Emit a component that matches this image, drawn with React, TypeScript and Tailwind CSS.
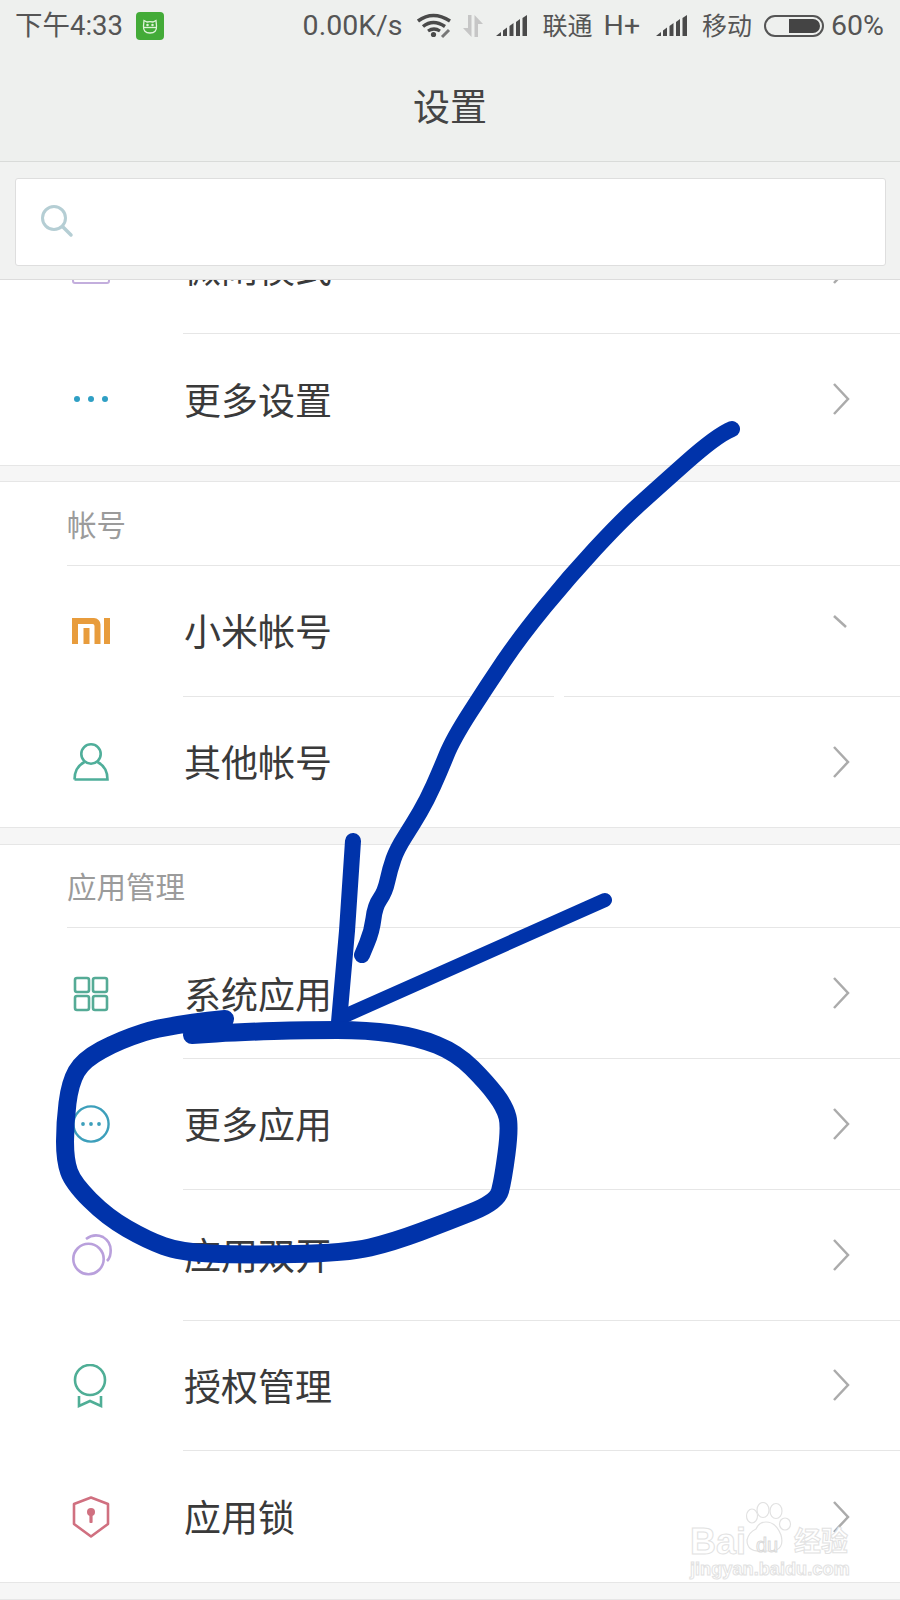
import type { ReactNode } from "react";

const FONT = "font-['Roboto','Noto_Sans_CJK_SC',sans-serif]";

// turns the sampled pen points into one smooth stroke
const smooth = (pts: number[][]) => {
  let d = `M${pts[0][0]} ${pts[0][1]}`;
  for (let i = 1; i < pts.length - 1; i++) {
    const mx = (pts[i][0] + pts[i + 1][0]) / 2;
    const my = (pts[i][1] + pts[i + 1][1]) / 2;
    d += ` Q${pts[i][0]} ${pts[i][1]} ${mx} ${my}`;
  }
  const last = pts[pts.length - 1];
  return d + ` L${last[0]} ${last[1]}`;
};

const longArrow = [
  [732, 429], [717, 435], [653, 492], [620, 522], [570, 576], [520, 637], [487, 686], [453, 739],
  [440, 771], [427, 800], [413, 824], [397, 849], [390, 869], [385, 892], [375, 906], [372, 931], [362, 955],
];

const loop = [
  [225, 1019], [167, 1025], [120, 1040], [83, 1060], [70, 1083], [65, 1123], [65, 1160], [73, 1183],
  [107, 1217], [147, 1240], [180, 1252], [240, 1255], [347, 1253], [393, 1242], [447, 1222], [497, 1202],
  [503, 1180], [510, 1127], [505, 1107], [487, 1083], [457, 1053], [417, 1037], [367, 1030], [307, 1030],
  [240, 1032], [192, 1035],
];

const Chevron = ({ cut = false }: { cut?: boolean }) => (
  <svg width="18" height="32" viewBox="0 0 18 32" fill="none" stroke="#ababab" strokeWidth="2.5" className="mr-[50px] shrink-0">
    {cut ? <path d="M2 1L14 12" /> : <path d="M2 1L16 16L2 31" />}
  </svg>
);

const Row = ({ icon, label, last = false, cut = false }: { icon: ReactNode; label: string; last?: boolean; cut?: boolean }) => (
  <div className="flex h-[130.75px] bg-white">
    <div className="flex w-[183px] shrink-0 items-center pl-[72px]">{icon}</div>
    <div className={`flex flex-1 items-center justify-between ${last ? "" : "border-b border-[#e6e6e6]"}`}>
      <span className="pl-[1px] pt-[6px] text-[37px] leading-none text-[#3a3a3a]">{label}</span>
      <Chevron cut={cut} />
    </div>
  </div>
);

const SectionHead = ({ title }: { title: string }) => (
  <div className="h-[83.5px] bg-white pl-[67px]">
    <div className="flex h-full items-center border-b border-[#e6e6e6] pt-[6px] text-[29.5px] leading-none text-[#9b9b9b]">{title}</div>
  </div>
);

const Gap = () => <div className="h-[17.5px] border-y border-[#e6e6e6] bg-[#f6f6f6]" />;

const Signal = () => (
  <svg width="32" height="22" viewBox="0 0 32 22" fill="#4a4a4a">
    <path d="M0 21L5 17V21Z" />
    <path d="M7 15.5L11 12.5V21H7Z" />
    <path d="M13.5 11L17.5 8V21H13.5Z" />
    <path d="M20 7L24 4V21H20Z" />
    <path d="M26.5 3L31 0V21H26.5Z" />
  </svg>
);

export default function App() {
  return (
    <div className={`relative h-[1600px] w-[900px] overflow-hidden bg-white ${FONT}`}>
      {/* status bar */}
      <div className="flex h-[52px] items-center justify-between bg-[#eef0ee] pl-[15px] pr-[16px] text-[#555]">
        <div className="flex items-center">
          <span className="text-[27.5px] leading-none">下午4:33</span>
          <div className="ml-[13px] flex h-[28px] w-[28px] items-center justify-center rounded-[4px] bg-[#43ab38]">
            <svg width="18" height="18" viewBox="0 0 18 18" fill="none" stroke="#dff3da" strokeWidth="1.3">
              <path d="M3 3.5L6 5Q9 4.2 12 5L15 3.5L15.5 9Q16 16 9 16Q2 16 2.5 9Z" />
              <path d="M3 10.5H15" />
              <circle cx="6.5" cy="8" r=".6" />
              <circle cx="11.5" cy="8" r=".6" />
            </svg>
          </div>
        </div>
        <div className="flex items-center">
          <span className="text-[28.5px] leading-none">0.00K/s</span>
          <svg className="ml-[14px]" width="36" height="26" viewBox="0 0 36 26" fill="none" stroke="#4a4a4a">
            <path d="M1 8Q16 -3 33 8" strokeWidth="3.5" />
            <path d="M6 13.5Q16 5.5 28 13.5" strokeWidth="3.5" />
            <path d="M11 18Q17 14 23 18" strokeWidth="3.2" />
            <circle cx="16.5" cy="21.5" r="2.6" fill="#4a4a4a" stroke="none" />
            <path d="M25 24L32 17" stroke="#777" strokeWidth="3" />
          </svg>
          <svg className="ml-[9px]" width="22" height="22" viewBox="0 0 22 22" fill="#c6c6c6">
            <path d="M6 0H9.5V22L1 13H6Z" />
            <path d="M12.5 0L21 9H16V22H12.5Z" />
          </svg>
          <div className="ml-[12px]">
            <Signal />
          </div>
          <span className="ml-[15px] text-[25px] leading-none">联通</span>
          <span className="ml-[11px] text-[28.5px] leading-none">H+</span>
          <div className="ml-[16px]">
            <Signal />
          </div>
          <span className="ml-[14px] text-[25px] leading-none">移动</span>
          <div className="ml-[12px] flex h-[22px] w-[60px] justify-end rounded-full border-2 border-[#555] p-[2px]">
            <div className="h-full w-[31px] rounded-r-full bg-[#444]" />
          </div>
          <span className="ml-[7px] text-[28.5px] leading-none">60%</span>
        </div>
      </div>

      {/* title */}
      <div className="flex h-[110px] items-center justify-center border-b border-[#d9dbd9] bg-[#eef0ee] pt-[3px] text-[37px] leading-none text-[#444]">
        设置
      </div>

      {/* search */}
      <div className="h-[118px] border-b border-[#dcdcdc] bg-[#f1f2f1] pl-[15px] pr-[14px] pt-[16px]">
        <div className="flex h-[88px] items-center rounded-[3px] border border-[#dedede] bg-white pl-[24px]">
          <svg width="36" height="36" viewBox="0 0 36 36" fill="none" stroke="#b5ced4" strokeWidth="3">
            <circle cx="14" cy="14" r="11.5" />
            <path d="M22.5 22.5L31 31" strokeWidth="3.5" strokeLinecap="round" />
          </svg>
        </div>
      </div>

      {/* the list is scrolled, so the first row is cut by the search box */}
      <div className="h-[54px] overflow-hidden bg-white">
        <div className="-mt-[77px]">
          <Row
            label="微闹模式"
            icon={<div className="h-[32px] w-[38px] rounded-[3px] border-2 border-[#c3aedd]" />}
          />
        </div>
      </div>
      <Row
        label="更多设置"
        last
        icon={
          <svg width="38" height="8" viewBox="0 0 38 8" fill="#2f9fc4">
            <circle cx="5" cy="4" r="3" />
            <circle cx="19" cy="4" r="3" />
            <circle cx="33" cy="4" r="3" />
          </svg>
        }
      />
      <Gap />

      <SectionHead title="帐号" />
      <Row
        label="小米帐号"
        cut
        icon={
          <svg width="38" height="26" viewBox="0 0 38 26" fill="#e89c3c">
            <path d="M0 0H22A6.5 6.5 0 0 1 28.5 6.5V26H22.5V8A2 2 0 0 0 20.5 6H6V26H0Z" />
            <rect x="11.5" y="10" width="6" height="16" />
            <rect x="32" width="6" height="26" />
          </svg>
        }
      />
      <Row
        label="其他帐号"
        last
        icon={
          <svg width="38" height="38" viewBox="0 0 38 38" fill="none" stroke="#4fae9a" strokeWidth="2.6">
            <circle cx="19" cy="11" r="9.7" />
            <path d="M2.5 36.5Q2.5 24 12.5 19M25.5 19Q35.5 24 35.5 36.5H2.5" />
          </svg>
        }
      />
      <Gap />

      <SectionHead title="应用管理" />
      <Row
        label="系统应用"
        icon={
          <svg width="38" height="36" viewBox="0 0 38 36" fill="none" stroke="#55ab96" strokeWidth="2.6">
            <rect x="3" y="2" width="14" height="14" rx="2" />
            <rect x="21" y="2" width="14" height="14" rx="2" />
            <rect x="3" y="20" width="14" height="14" rx="2" />
            <rect x="21" y="20" width="14" height="14" rx="2" />
          </svg>
        }
      />
      <Row
        label="更多应用"
        icon={
          <svg width="38" height="38" viewBox="0 0 38 38" fill="none" stroke="#3d9fbb" strokeWidth="2.4">
            <circle cx="19" cy="19" r="17.6" />
            <g fill="#3d9fbb" stroke="none">
              <circle cx="11" cy="19" r="1.9" />
              <circle cx="19" cy="19" r="1.9" />
              <circle cx="27" cy="19" r="1.9" />
            </g>
          </svg>
        }
      />
      <Row
        label="应用双开"
        icon={
          <svg width="42" height="42" viewBox="0 0 42 42" fill="none" stroke="#b9a0dc" strokeWidth="2.6">
            <circle cx="16.5" cy="25" r="15.2" />
            <path d="M14 5Q22 -1 31 3Q41 9 38 22Q37 25 35 27" />
          </svg>
        }
      />
      <Row
        label="授权管理"
        icon={
          <svg width="38" height="44" viewBox="0 0 38 44" fill="none" stroke="#4fae96" strokeWidth="2.6">
            <circle cx="18" cy="16" r="15" />
            <path d="M7 32V42L18 37L29 42V32" />
          </svg>
        }
      />
      <Row
        label="应用锁"
        last
        icon={
          <svg width="38" height="42" viewBox="0 0 38 42" fill="none" stroke="#d07080" strokeWidth="2.6">
            <path d="M19 1.5L36 8V28L19 40.5L2 28V8Z" strokeLinejoin="round" />
            <g fill="#d07080" stroke="none">
              <circle cx="19" cy="16" r="4" />
              <rect x="17.4" y="17" width="3.2" height="10" rx="1" />
            </g>
          </svg>
        }
      />
      <Gap />

      {/* watermark on top of the screenshot */}
      <div className="absolute left-[690px] top-[1502px] w-[170px] font-['Liberation_Sans',sans-serif] text-white">
        <svg className="absolute left-[48px] top-0" width="54" height="54" viewBox="0 0 54 54" fill="white" stroke="#e2e2e2" strokeWidth="1.2">
          <ellipse cx="14" cy="14" rx="5.5" ry="7" />
          <ellipse cx="25" cy="8" rx="6" ry="7.5" />
          <ellipse cx="38" cy="9" rx="6" ry="7.5" />
          <ellipse cx="47" cy="22" rx="5.5" ry="6" />
          <path d="M28 20Q38 20 43 33Q47 48 33 49Q27 49 23 49Q9 50 9 38Q11 30 18 27Q21 20 28 20Z" />
        </svg>
        <div className="absolute left-0 top-[22px] text-[36px] font-bold leading-none [-webkit-text-stroke:1px_#e2e2e2]">Bai</div>
        <div className="absolute left-[66px] top-[33px] text-[20px] leading-none text-white [-webkit-text-stroke:1px_#dadada]">du</div>
        <div className="absolute left-[104px] top-[24px] font-['Noto_Sans_CJK_SC',sans-serif] text-[27px] font-bold leading-none whitespace-nowrap [-webkit-text-stroke:1px_#e2e2e2]">经验</div>
        <div className="absolute left-0 top-[58px] text-[18.2px] font-bold leading-none whitespace-nowrap [-webkit-text-stroke:1px_#e2e2e2]">jingyan.baidu.com</div>
      </div>

      {/* hand drawn marks */}
      <svg className="pointer-events-none absolute left-0 top-0" width="900" height="1600" viewBox="0 0 900 1600" fill="none" stroke="#0033aa" strokeLinecap="round" strokeLinejoin="round">
        <rect x="554" y="695" width="10" height="3" fill="white" stroke="none" />
        <path d={smooth(longArrow)} strokeWidth="16" />
        <path d="M353 841L347 931L339 1022" strokeWidth="16" />
        <path d="M605 900L340 1018" strokeWidth="14" />
        <path d={smooth(loop)} strokeWidth="18" />
      </svg>
    </div>
  );
}
